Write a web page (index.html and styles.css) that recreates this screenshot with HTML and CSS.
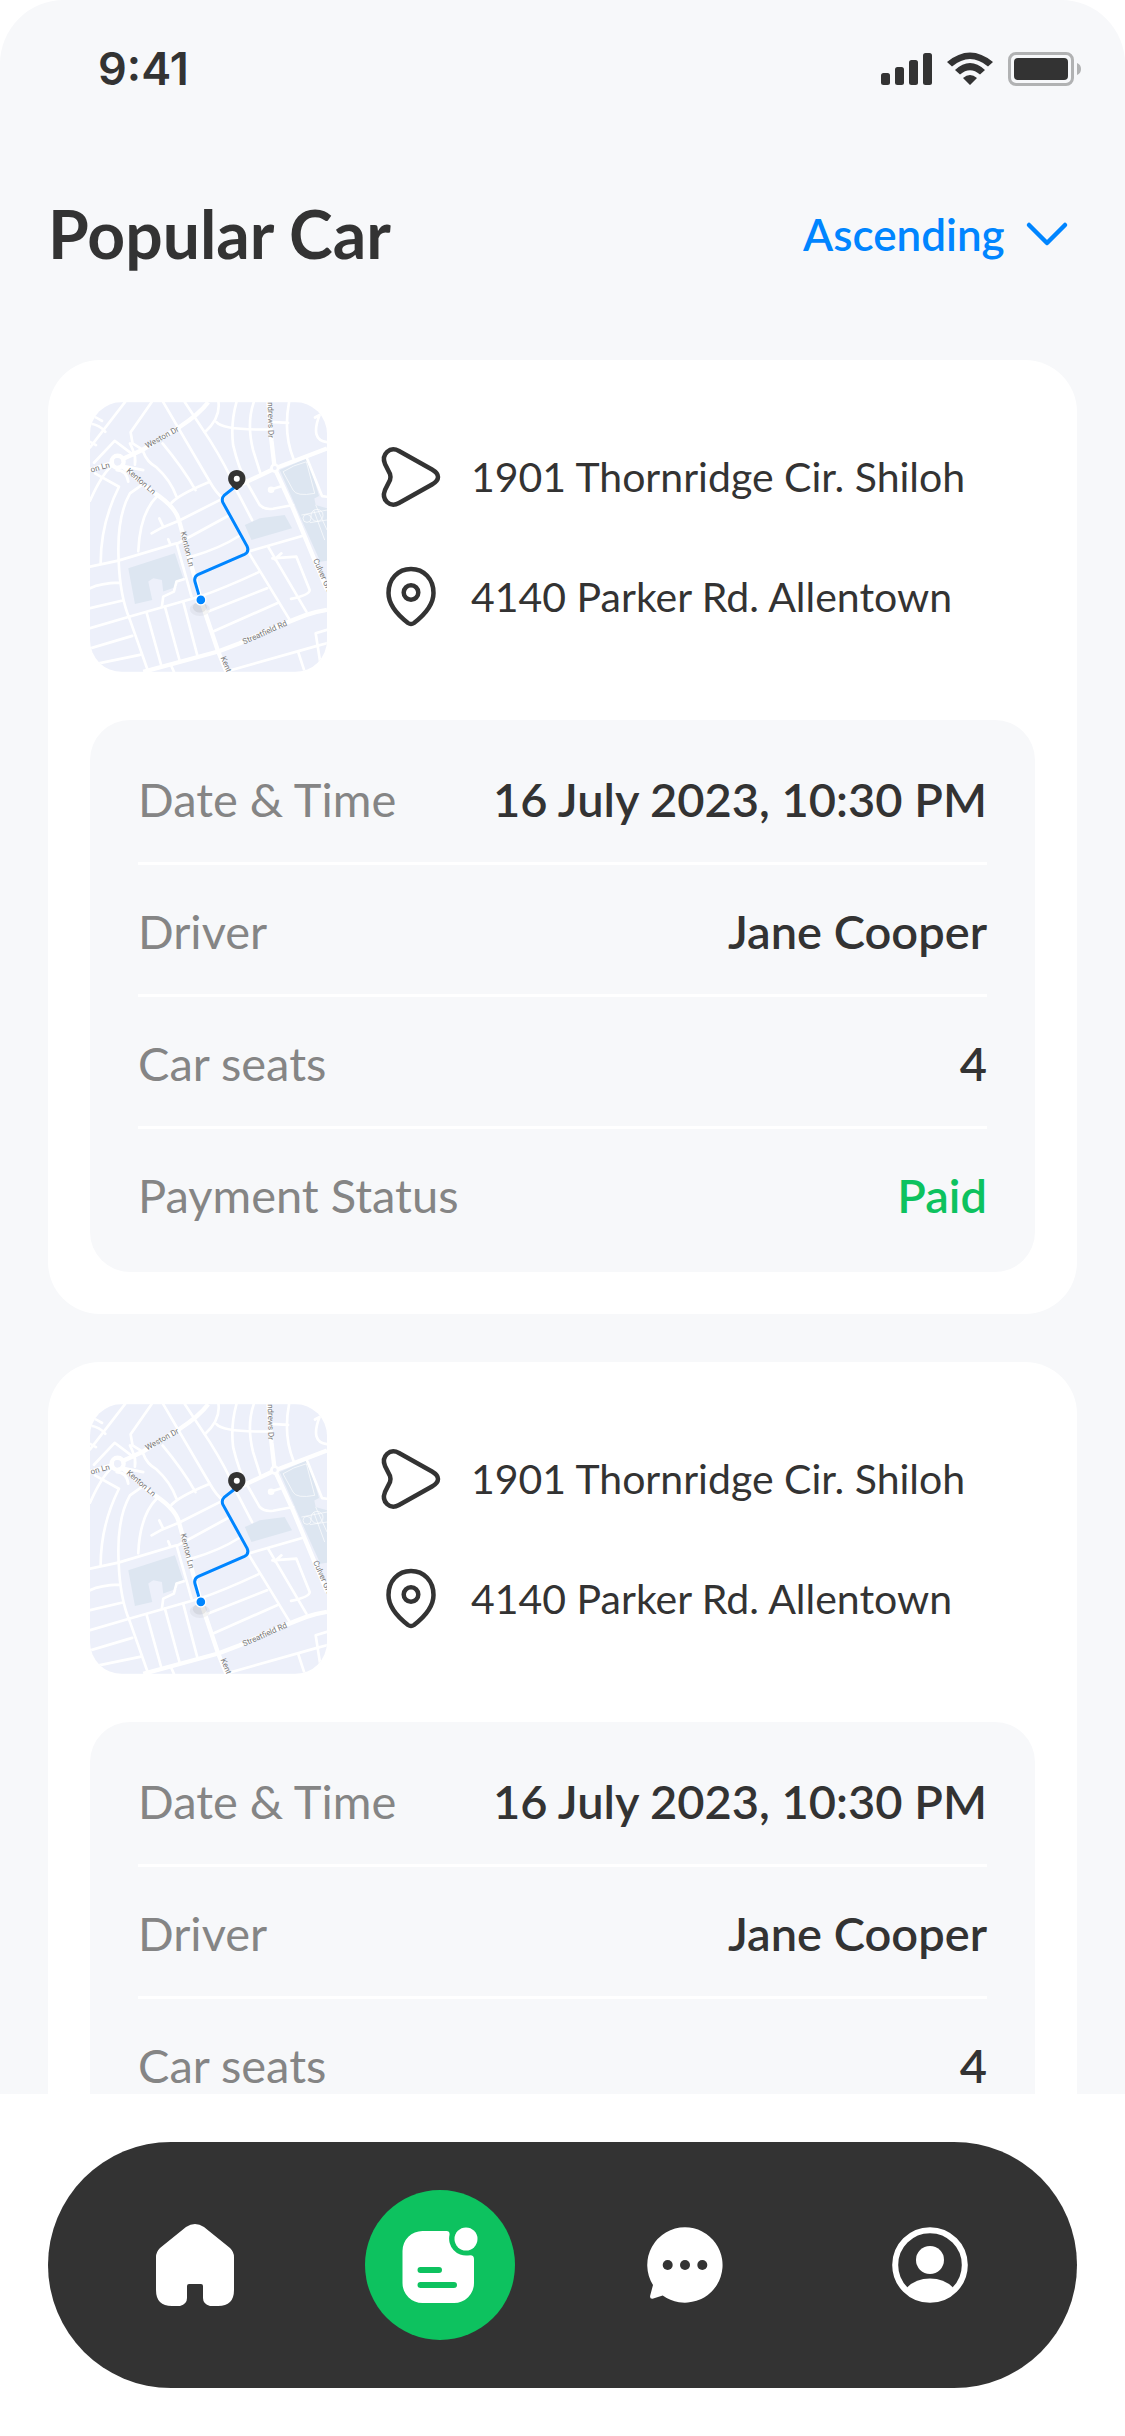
FILE: index.html
```html
<!DOCTYPE html>
<html lang="en">
<head>
<meta charset="utf-8">
<meta name="viewport" content="width=device-width, initial-scale=1">
<title>Popular Car</title>
<link rel="stylesheet" href="styles.css">
</head>
<body>
<svg class="sprite" aria-hidden="true">
  <symbol id="map" viewBox="30 36 712 810">
    <rect x="30" y="36" width="712" height="810" fill="#edf0fa"/>
    <g fill="#dde6f1">
      <path d="M600 240L685 203L718 318L704 325L708 345L742 355V512L722 515L670 400Z"/>
      <path d="M495 405L540 385L615 375L637 415L515 450Z"/>
      <path d="M145 535L285 490L310 565L285 575L292 590L250 605L246 570L220 565L205 575L217 630L165 642Z"/>
    </g>
    <g fill="none" stroke="#fff" stroke-width="8" stroke-linejoin="round" stroke-linecap="round">
      <path d="M135 36L30 172M30 76Q50 80 66 92M30 100Q60 105 76 125M30 155L48 165"/>
      <path d="M215 36L152 126L158 160L190 180M250 36L390 275Q410 310 430 325M315 36L390 150Q440 230 470 300L517 390"/>
      <path d="M416 36Q422 85 375 126M410 96Q430 120 565 118M470 36Q452 100 460 165Q478 240 500 275L540 345Q555 360 580 356L640 345"/>
      <path d="M522 36Q500 100 520 180L542 250M628 36Q610 130 642 208M570 95L625 98M706 82L720 74Q690 150 742 156"/>
      <path d="M248 160Q310 235 347 300M190 185Q200 215 230 232Q272 270 290 320M275 338Q300 312 390 275M297 392L430 325"/>
      <path d="M215 430L242 415L297 392M238 385L250 410M290 462L450 375M335 500Q420 475 478 438"/>
      <path d="M30 530L115 512L290 460L335 620M265 448L272 465M116 510Q110 380 150 310L185 285M175 484Q180 370 230 320"/>
      <path d="M62 520Q62 400 117 290L45 250M30 332Q70 240 110 215M42 218L104 152L165 198V224M118 225L190 240M150 160Q170 200 165 220M110 240Q140 240 145 275"/>
      <path d="M30 715L150 680L360 620Q440 592 540 545M116 510Q120 620 150 690L205 846M30 595Q60 580 118 578M30 655L128 632M30 776L157 738M30 826L180 795"/>
      <path d="M200 668L245 830M255 650L300 815M310 635L352 795M246 650L250 620L282 605L290 575L312 568M275 830L282 846"/>
      <path d="M385 665L562 595M400 725L592 640M505 485L630 690M505 485L670 437M565 470L680 665M578 505L650 500L690 600Q690 615 634 627M585 508L605 490"/>
      <path d="M450 842L712 768L742 760M726 846L708 730L742 720M655 785L675 846M682 205L727 318L742 320M574 298L600 290"/>
    </g>
    <g fill="none" stroke="#fff" stroke-width="13" stroke-linejoin="round">
      <path d="M190 846L415 785L480 760Q600 705 680 675Q710 665 742 660"/>
      <path d="M30 240L110 215L190 178L300 110Q360 70 385 36"/>
      <path d="M110 215Q150 245 210 300Q285 345 297 390L363 630L415 785L440 846"/>
      <path d="M566 36L575 150L585 235L640 355L742 600"/>
      <path d="M480 285L585 235L742 175"/>
      <circle cx="113" cy="215" r="18"/>
    </g>
    <circle cx="574" cy="299" r="10" fill="#fff"/>
    <circle cx="113" cy="215" r="11" fill="#edf0fa"/>
    <circle cx="585" cy="234" r="14" fill="#fff"/>
    <circle cx="585" cy="234" r="6" fill="#edf0fa"/>
    <g fill="none" stroke="#fff" stroke-width="2">
      <circle cx="682" cy="385" r="12"/>
      <circle cx="712" cy="376" r="18"/>
      <path d="M665 375L742 360M690 398L742 390M702 360L735 450M708 345L742 420M610 245Q640 225 680 215L705 310Q650 320 640 300Z"/>
    </g>
    <g class="map-label">
      <text transform="translate(202 175) rotate(-29)">Weston Dr</text>
      <text transform="translate(34 247) rotate(-15)">on Ln</text>
      <text transform="translate(138 244) rotate(41)">Kenton Ln</text>
      <text transform="translate(302 427) rotate(76)">Kenton Ln</text>
      <text transform="translate(493 764) rotate(-24)">Streatfield Rd</text>
      <text transform="translate(564 36) rotate(89)">ndrews Dr</text>
      <text transform="translate(700 510) rotate(66)">Culver Gro</text>
      <text transform="translate(422 804) rotate(67)">Kent</text>
    </g>
    <path d="M466 290L434 315Q424 325 429 337L502 469Q509 486 494 493L356 553Q342 560 345 574L357 615" fill="none" stroke="#0085ff" stroke-width="9"/>
    <ellipse cx="360" cy="658" rx="30" ry="20" fill="#333" opacity=".05"/>
    <ellipse cx="360" cy="652" rx="21" ry="16" fill="#333" opacity=".08"/>
    <circle cx="363" cy="630" r="15" fill="#0085ff" stroke="#fff" stroke-width="4"/>
    <path d="M471 240C486 240 497 251 497 266C497 280 485 290 474 299Q471 301 468 299C457 290 445 280 445 266C445 251 456 240 471 240Z" fill="#333"/>
    <circle cx="471" cy="266" r="9" fill="#fff"/>
  </symbol>
  <symbol id="send" viewBox="0 0 72 72">
    <path d="M24 10L57 28.500Q63 32 63 36Q63 40 57 43.500L24 62C15 67 6 59 10 49L15 39Q16 36 15 33L10 23C6 13 15 5 24 10Z" fill="none" stroke="#333" stroke-width="4.500" stroke-linejoin="round"/>
  </symbol>
  <symbol id="pin" viewBox="0 0 72 72">
    <g fill="none" stroke="#333" stroke-width="4.500">
      <path d="M36 8C49 8 58.500 18 58.500 32C58.500 45 48 55 39 62Q36 64 33 62C24 55 13.500 45 13.500 32C13.500 18 23 8 36 8Z"/>
      <circle cx="36" cy="31.500" r="7.300"/>
    </g>
  </symbol>
</svg>

<div class="screen">
  <header class="status-bar">
    <time>9:41</time>
    <div class="status-icons">
      <svg width="51" height="34" viewBox="0 0 51 34" fill="#333"><rect y="21" width="9" height="12" rx="2.500"/><rect x="14" y="15" width="9" height="18" rx="2.500"/><rect x="28" y="8" width="9" height="25" rx="2.500"/><rect x="42" y="1" width="9" height="32" rx="2.500"/></svg>
      <svg width="46" height="34" viewBox="0 0 46 34" fill="#333"><path d="M0 10Q23-9 46 10L41 14.500Q23-.5 5 14.500ZM8 18Q23 4 38 18L33 22.500Q23 14 13 22.500ZM16 26Q23 20 30 26L23 33Z"/></svg>
      <svg width="73" height="34" viewBox="0 0 73 34"><rect x="1.500" y="1.500" width="63" height="31" rx="6.500" fill="none" stroke="#b1b2b3" stroke-width="3"/><rect x="6" y="6" width="54" height="22" rx="4" fill="#333"/><path d="M69 11Q73 12.500 73 17T69 23Z" fill="#b1b2b3"/></svg>
    </div>
  </header>

  <main class="content">
    <div class="page-head">
      <h1>Popular Car</h1>
      <div class="sort">
        <select aria-label="Sort order"><option>Ascending</option></select>
        <svg width="60" height="60" viewBox="0 0 60 60" aria-hidden="true"><path d="M12 21L30 39L48 21" fill="none" stroke="#0085ff" stroke-width="4.500" stroke-linecap="round" stroke-linejoin="round"/></svg>
      </div>
    </div>

    <article class="card">
      <div class="trip">
        <svg class="map" role="img" aria-label="Route map"><use href="#map"/></svg>
        <ul class="stops">
          <li><svg class="stop-icon" aria-hidden="true"><use href="#send"/></svg>1901 Thornridge Cir. Shiloh</li>
          <li><svg class="stop-icon" aria-hidden="true"><use href="#pin"/></svg>4140 Parker Rd. Allentown</li>
        </ul>
      </div>
      <dl class="details">
        <div><dt>Date &amp; Time</dt><dd>16 July 2023, 10:30 PM</dd></div>
        <div><dt>Driver</dt><dd>Jane Cooper</dd></div>
        <div><dt>Car seats</dt><dd>4</dd></div>
        <div><dt>Payment Status</dt><dd class="paid">Paid</dd></div>
      </dl>
    </article>

    <article class="card">
      <div class="trip">
        <svg class="map" role="img" aria-label="Route map"><use href="#map"/></svg>
        <ul class="stops">
          <li><svg class="stop-icon" aria-hidden="true"><use href="#send"/></svg>1901 Thornridge Cir. Shiloh</li>
          <li><svg class="stop-icon" aria-hidden="true"><use href="#pin"/></svg>4140 Parker Rd. Allentown</li>
        </ul>
      </div>
      <dl class="details">
        <div><dt>Date &amp; Time</dt><dd>16 July 2023, 10:30 PM</dd></div>
        <div><dt>Driver</dt><dd>Jane Cooper</dd></div>
        <div><dt>Car seats</dt><dd>4</dd></div>
        <div><dt>Payment Status</dt><dd class="paid">Paid</dd></div>
      </dl>
    </article>
  </main>
</div>

<footer class="dock">
  <nav class="tabs" aria-label="Main">
    <a href="#home" aria-label="Home"><svg viewBox="0 0 90 90"><path fill="#fff" d="M36 7Q45 1 54 7L80 28Q84 32 84 37V70Q84 86 68 86H60Q53 84 53 78V66Q53 64 51 64H39Q37 64 37 66V78Q37 84 30 86H22Q6 86 6 70V37Q6 32 10 28Z"/></svg></a>
    <a href="#orders" class="active" aria-label="Orders" aria-current="page"><svg viewBox="0 0 90 90"><path fill="#fff" d="M27.500 11H51.500Q55 11 54.500 15A17 17 0 0 0 73 35.500Q79 34 79 39V63A20 20 0 0 1 59 83H27.500A20 20 0 0 1 7.500 63V31A20 20 0 0 1 27.500 11Z"/><circle cx="71" cy="19" r="11.500" fill="#fff"/><path d="M25.500 50H44M25.500 65H59" stroke="#0dc25f" stroke-width="6" stroke-linecap="round"/></svg></a>
    <a href="#messages" aria-label="Messages"><svg viewBox="0 0 90 90"><path fill="#fff" d="M45 7.300A37.700 37.700 0 1 1 22.700 75.500L12.500 78.700Q9.500 79 10.200 75.500L13 65A37.700 37.700 0 0 1 45 7.300Z"/><g fill="#333"><circle cx="27.700" cy="45" r="5"/><circle cx="45" cy="45" r="5"/><circle cx="62.300" cy="45" r="5"/></g></svg></a>
    <a href="#profile" aria-label="Profile"><svg viewBox="0 0 90 90"><circle cx="45" cy="45" r="34.800" fill="none" stroke="#fff" stroke-width="6"/><circle cx="45" cy="40" r="14" fill="#fff"/><path fill="#fff" d="M22 67.500Q31 58.500 45 58.500T68 67.500Q60 81 45 81T22 67.500Z"/></svg></a>
  </nav>
</footer>
</body>
</html>
```
FILE: styles.css
```css
* {
  box-sizing: border-box;
  margin: 0;
  padding: 0;
}

body {
  display: flex;
  flex-direction: column;
  height: 100vh;
  background: #fff;
  color: #333;
  font-family: Lato, "Open Sans", sans-serif;
}

.sprite {
  position: absolute;
  width: 0;
  height: 0;
}

.screen {
  display: flex;
  flex: 1;
  flex-direction: column;
  min-height: 0;
  background: #f7f8fa;
  border-radius: 64px 64px 0 0;
  overflow: hidden;
}

/* Status bar */
.status-bar {
  display: flex;
  flex: none;
  align-items: center;
  justify-content: space-between;
  height: 138px;
  padding: 0 44px 0 98px;
}

.status-bar time {
  font: 600 45px/60px Inter, sans-serif;
}

.status-icons {
  display: flex;
  gap: 15px;
}

/* Scrolling list */
.content {
  flex: 1;
  min-height: 0;
  padding: 0 48px 48px;
  overflow-y: auto;
  scrollbar-width: none;
}

.page-head {
  display: flex;
  align-items: center;
  justify-content: space-between;
  padding: 54px 0 84px;
}

h1 {
  font-size: 66px;
  font-weight: 700;
  line-height: 84px;
}

.sort {
  display: flex;
  align-items: center;
  gap: 12px;
}

.sort select {
  appearance: none;
  border: 0;
  background: none;
  color: #0085ff;
  font-family: inherit;
  font-size: 44px;
  font-weight: 600;
  line-height: 60px;
}

.card {
  padding: 42px;
  background: #fff;
  border-radius: 52px;
}

.card + .card {
  margin-top: 48px;
}

.trip {
  display: flex;
  align-items: center;
  gap: 48px;
  margin-bottom: 48px;
}

.map {
  flex: none;
  width: 237px;
  height: 270px;
  border-radius: 32px;
}

.map-label {
  fill: #757575;
  font: 24px Roboto, sans-serif;
}

.stops {
  display: grid;
  gap: 48px;
  list-style: none;
}

.stops li {
  display: flex;
  align-items: center;
  gap: 24px;
  font-size: 41px;
  line-height: 60px;
}

.stop-icon {
  flex: none;
  width: 72px;
  height: 72px;
}

.details {
  padding: 13px 48px 11px;
  background: #f7f8fa;
  border-radius: 40px;
  font-size: 47px;
  line-height: 60px;
}

.details div {
  display: flex;
  justify-content: space-between;
  padding: 36px 0 33px;
  border-bottom: 3px solid #fff;
}

.details div:last-child {
  border-bottom-color: transparent;
}

.details dt {
  color: #858585;
}

.details dd {
  font-weight: 600;
}

.details .paid {
  color: #0dc25f;
}

/* Bottom navigation */
.dock {
  flex: none;
  padding: 48px;
}

.tabs {
  display: flex;
  justify-content: space-between;
  padding: 48px 72px;
  background: #333;
  border-radius: 123px;
}

.tabs a {
  display: grid;
  place-items: center;
  width: 150px;
  height: 150px;
  border-radius: 50%;
}

.tabs .active {
  background: #0dc25f;
}

.tabs svg {
  width: 90px;
  height: 90px;
}
```
